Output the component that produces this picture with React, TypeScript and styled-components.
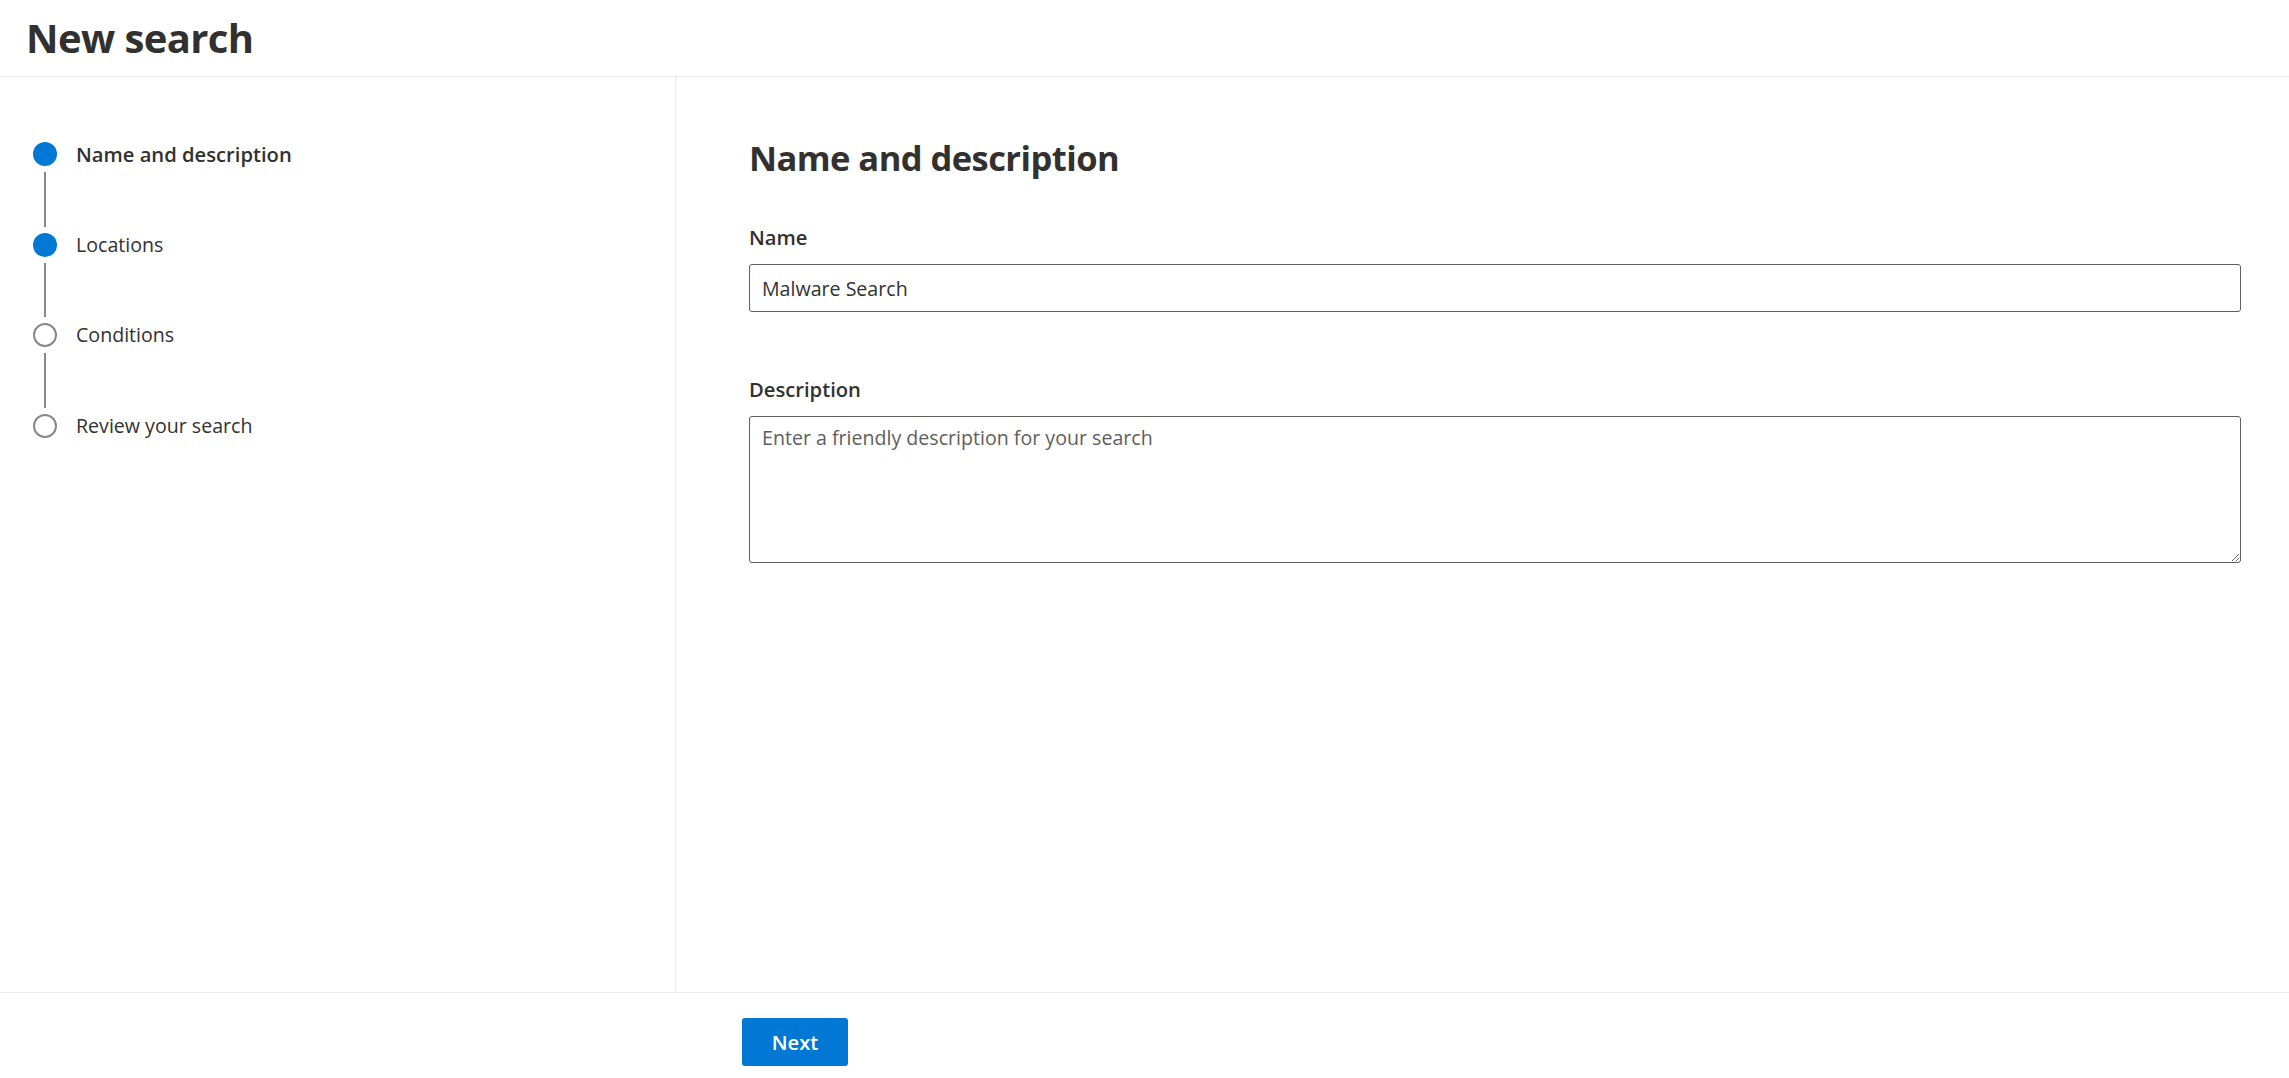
import React from 'react';
import styled, { createGlobalStyle } from 'styled-components';

const GlobalStyle = createGlobalStyle`
  html, body {
    margin: 0;
    padding: 0;
    background: #ffffff;
  }
  body {
    font-family: 'Segoe UI', 'Open Sans', 'Noto Sans', sans-serif;
    color: #323130;
  }
  * {
    box-sizing: border-box;
  }
`;

interface Step {
  label: string;
  done: boolean;
  current?: boolean;
}

const steps: Step[] = [
  { label: 'Name and description', done: true, current: true },
  { label: 'Locations', done: true },
  { label: 'Conditions', done: false },
  { label: 'Review your search', done: false },
];

function App() {
  return (
    <>
      <GlobalStyle />
      <Page>
        <Header>
          <Title>New search</Title>
        </Header>
        <Body>
          <Nav>
            <StepList>
              {steps.map((step, i) => (
                <StepItem key={step.label}>
                  <StepRow>
                    <Dot $filled={step.done} />
                    <StepLabel $current={!!step.current}>{step.label}</StepLabel>
                  </StepRow>
                  {i < steps.length - 1 && <Connector />}
                </StepItem>
              ))}
            </StepList>
          </Nav>
          <Content>
            <SectionTitle>Name and description</SectionTitle>
            <Field>
              <Label htmlFor="name">Name</Label>
              <TextInput id="name" defaultValue="Malware Search" />
            </Field>
            <Field $gap={62}>
              <Label htmlFor="desc">Description</Label>
              <TextArea id="desc" placeholder="Enter a friendly description for your search" />
            </Field>
          </Content>
        </Body>
        <Footer>
          <PrimaryButton type="button">Next</PrimaryButton>
        </Footer>
      </Page>
    </>
  );
}

const Page = styled.div`
  height: 100vh;
  display: flex;
  flex-direction: column;
`;

const Header = styled.header`
  height: 77px;
  flex-shrink: 0;
  display: flex;
  align-items: center;
  padding-left: 26px;
  border-bottom: 1px solid #edebe9;
`;

const Title = styled.h1`
  margin: 0;
  font-size: 40px;
  font-weight: 700;
  letter-spacing: -0.6px;
  line-height: 56px;
  color: #323130;
`;

const Body = styled.div`
  flex: 1;
  display: flex;
  min-height: 0;
`;

const Nav = styled.nav`
  width: 676px;
  flex-shrink: 0;
  border-right: 1px solid #edebe9;
  padding: 65px 0 0 33px;
`;

const StepList = styled.ol`
  list-style: none;
  margin: 0;
  padding: 0;
`;

const StepItem = styled.li`
  display: flex;
  flex-direction: column;
`;

const StepRow = styled.div`
  display: flex;
  align-items: center;
  height: 24px;
  gap: 19px;
`;

const Dot = styled.span<{ $filled: boolean }>`
  width: 24px;
  height: 24px;
  border-radius: 50%;
  flex-shrink: 0;
  background: ${({ $filled }) => ($filled ? '#0078d4' : '#ffffff')};
  border: ${({ $filled }) => ($filled ? 'none' : '2px solid #8a8886')};
`;

const StepLabel = styled.span<{ $current: boolean }>`
  font-size: ${({ $current }) => ($current ? '20.2px' : '19.6px')};
  line-height: 30px;
  font-weight: ${({ $current }) => ($current ? 600 : 400)};
  color: #323130;
`;

const Connector = styled.span`
  width: 2px;
  height: 54.5px;
  margin: 6px 0 6px 11px;
  background: #8a8886;
`;

const Content = styled.main`
  flex: 1;
  padding: 57px 48px 0 73px;
`;

const SectionTitle = styled.h2`
  margin: 0 0 40px;
  font-size: 34.5px;
  line-height: 48px;
  font-weight: 700;
  letter-spacing: -0.55px;
  color: #323130;
`;

const Field = styled.div<{ $gap?: number }>`
  display: flex;
  flex-direction: column;
  margin-top: ${({ $gap }) => $gap ?? 0}px;
`;

const Label = styled.label`
  font-size: 20.2px;
  line-height: 30px;
  font-weight: 600;
  color: #323130;
  margin-bottom: 12px;
`;

const TextInput = styled.input`
  height: 48px;
  width: 100%;
  padding: 0 12px;
  border: 1px solid #605e5c;
  border-radius: 3px;
  font-family: inherit;
  font-size: 19.6px;
  color: #323130;
  outline: none;
  background: #ffffff;
`;

const TextArea = styled.textarea`
  height: 147px;
  width: 100%;
  padding: 6px 12px;
  border: 1px solid #605e5c;
  border-radius: 3px;
  font-family: inherit;
  font-size: 19.6px;
  line-height: 30px;
  color: #323130;
  outline: none;
  resize: vertical;
  &::placeholder {
    color: #605e5c;
  }
`;

const Footer = styled.footer`
  height: 86px;
  flex-shrink: 0;
  border-top: 1px solid #edebe9;
  padding: 25px 0 0 742px;
`;

const PrimaryButton = styled.button`
  height: 48px;
  min-width: 106px;
  padding: 0 24px;
  border: none;
  border-radius: 3px;
  background: #0078d4;
  color: #ffffff;
  font-family: inherit;
  font-size: 20.2px;
  font-weight: 600;
  cursor: pointer;
`;

export default App;
